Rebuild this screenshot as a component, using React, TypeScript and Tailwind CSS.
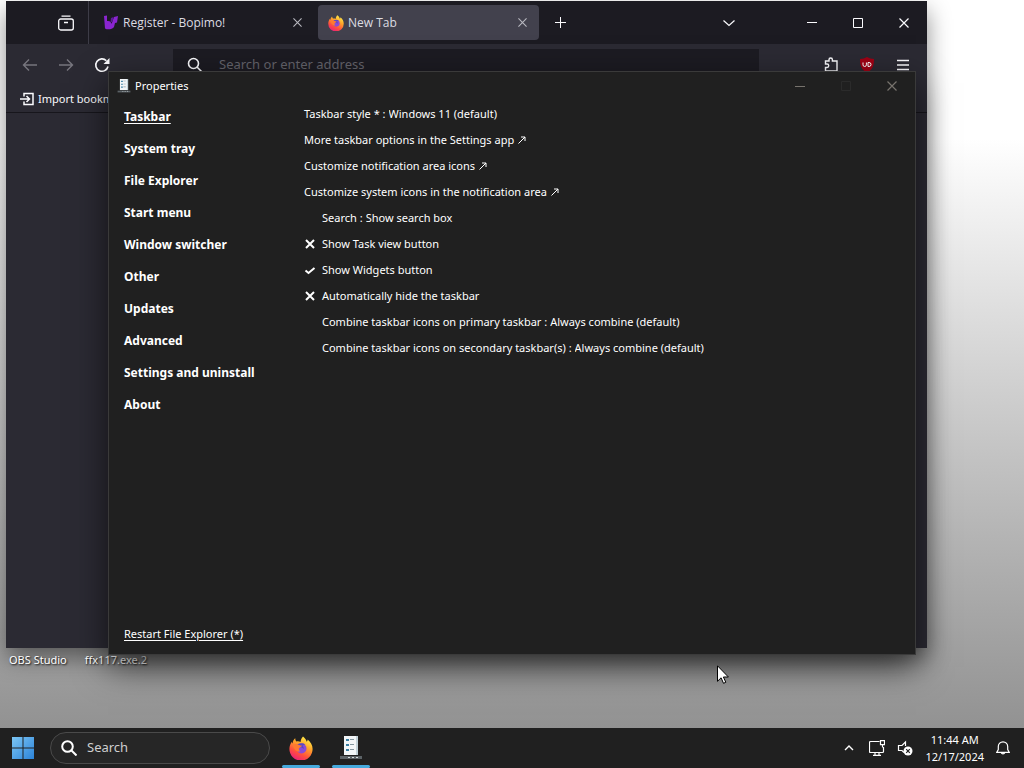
import { useState } from "react";
import type { ReactNode } from "react";

const sections = [
  "Taskbar",
  "System tray",
  "File Explorer",
  "Start menu",
  "Window switcher",
  "Other",
  "Updates",
  "Advanced",
  "Settings and uninstall",
  "About",
];

type Row =
  | { kind: "select"; label: string; value: string; indent?: boolean }
  | { kind: "link"; label: string }
  | { kind: "toggle"; label: string; checked: boolean };

const rows: Row[] = [
  { kind: "select", label: "Taskbar style *", value: "Windows 11 (default)" },
  { kind: "link", label: "More taskbar options in the Settings app" },
  { kind: "link", label: "Customize notification area icons" },
  { kind: "link", label: "Customize system icons in the notification area" },
  { kind: "select", label: "Search", value: "Show search box", indent: true },
  { kind: "toggle", label: "Show Task view button", checked: false },
  { kind: "toggle", label: "Show Widgets button", checked: true },
  { kind: "toggle", label: "Automatically hide the taskbar", checked: false },
  {
    kind: "select",
    label: "Combine taskbar icons on primary taskbar",
    value: "Always combine (default)",
    indent: true,
  },
  {
    kind: "select",
    label: "Combine taskbar icons on secondary taskbar(s)",
    value: "Always combine (default)",
    indent: true,
  },
];

function Stroke({
  size,
  width = 1,
  className = "",
  children,
}: {
  size: number;
  width?: number;
  className?: string;
  children: ReactNode;
}) {
  return (
    <svg
      width={size}
      height={size}
      viewBox={`0 0 ${size} ${size}`}
      fill="none"
      stroke="currentColor"
      strokeWidth={width}
      className={`shrink-0 ${className}`}
      aria-hidden="true"
    >
      {children}
    </svg>
  );
}

function CloseIcon({ size }: { size: number }) {
  return (
    <svg
      width={size}
      height={size}
      viewBox="0 0 10 10"
      fill="none"
      stroke="currentColor"
      strokeWidth="1.2"
      className="shrink-0"
      aria-hidden="true"
    >
      <path d="M.5.5l9 9M9.5.5l-9 9" />
    </svg>
  );
}

function FirefoxIcon({ className }: { className: string }) {
  return (
    <svg viewBox="0 0 24 24" className={className} aria-hidden="true">
      <defs>
        <linearGradient id="fox" x1="0.8" y1="0.05" x2="0.3" y2="1">
          <stop offset="0" stopColor="#fff04a" />
          <stop offset="0.35" stopColor="#ffa52a" />
          <stop offset="0.7" stopColor="#ff4f3d" />
          <stop offset="1" stopColor="#e8207c" />
        </linearGradient>
      </defs>
      <path
        d="M14 .5c2 1.500 3.200 3.200 3.700 5.200.8-.6 1-1.500.9-2.300 3 2.300 5 5.800 5 9.600a11.600 11.600 0 0 1-23.200 0c0-3 1-5.500 2.500-7.300 0 .8.2 1.300.6 1.800C3.800 5.200 5 3.200 6.300 2.300c-.1 1.400.4 2.300 1.200 3.100 1.500-.3 2.900-.1 4.100.5.1-2 .9-4 2.400-5.400z"
        fill="url(#fox)"
      />
      <circle cx="12.500" cy="12.500" r="5" fill="#8a4bd6" />
      <path d="M9 8c2-1.200 5.500-1.200 7.500.7-1.500-.2-2.500.3-3 1 1 .8 1.500 2 1 3.300-2-2.500-5-2.200-6.500-.3-.8-1.700-.4-3.700 1-4.700z" fill="#5a48c0" />
      <path d="M3.500 9c2-1.500 4.500-1.500 6.500 0 .8.600 2 .5 3 .7-.5 1.200-2.300 1.600-3 2.500-.5 1 0 2.500 1.500 3.200-3.500.8-6-1-8-6.400z" fill="#ff7a30" />
    </svg>
  );
}

// notebook page standing on a taskbar strip
function PropertiesIcon({ className }: { className: string }) {
  return (
    <svg viewBox="0 0 24 24" className={className} aria-hidden="true">
      <path d="M5 0h14v19H5z" fill="#f2f6f8" />
      <path d="M17 0h2v19h-2z" fill="#c3d3da" />
      <path d="M7 3h3v2H7zM7 8h3v2H7zM7 13h3v2H7z" fill="#3a7fa3" />
      <path d="M11 3h4v1h-4zM11 8h4v1h-4zM11 13h4v1h-4z" fill="#8497a0" />
      <path d="M1 20h22v3H1z" fill="#5b6266" />
      <path d="M9 21h2v1H9zM13 21h2v1h-2zM17 21h2v1h-2z" fill="#d5dcdf" />
    </svg>
  );
}

function BrowserWindow() {
  return (
    <section
      aria-label="Firefox"
      className="absolute top-px right-[97px] bottom-20 left-1.5 flex flex-col bg-[#2b2a33] text-[#fbfbfe] shadow-[0_10px_22px_rgba(0,0,0,0.45)]"
    >
      <div className="flex h-[43px] shrink-0 items-center bg-[#1c1b22]">
        <div className="flex h-full w-[83px] shrink-0 items-center justify-end border-r border-[#3d3c47] pr-3.5">
          <button aria-label="Firefox View">
            <Stroke size={16} width={1.3}>
              <path d="M3.500 1.200h9M2.700 4h10.600a2 2 0 0 1 2 2v7a2 2 0 0 1-2 2H2.700a2 2 0 0 1-2-2V6a2 2 0 0 1 2-2zM6 7.500h4" />
            </Stroke>
          </button>
        </div>
        <div className="ml-2 flex h-9 w-[221px] items-center gap-1 pr-4 pl-1.5">
          <svg viewBox="0 0 16 16" className="size-4 shrink-0" fill="#8a25d0" aria-hidden="true">
            <path d="M1 1l3-.5V6c3-.5 4.500 1 4.500 3L11 2l4-1-1 6.500-2 .5-1 4c-1.500 2.500-7 3-9 1.500z" />
            <path d="M8 3l2.500-1-1 4.500-2 1z" fill="#5d1a9c" />
          </svg>
          <span className="flex-1 truncate font-['Open_Sans',sans-serif] text-xs text-[#dcdce2]">
            Register - Bopimo!
          </span>
          <button aria-label="Close Register - Bopimo!" className="text-[#b9b9c0]">
            <CloseIcon size={9} />
          </button>
        </div>
        <div className="flex h-[35px] w-[221px] items-center gap-1 rounded bg-[#42414d] pr-3 pl-2.5">
          <FirefoxIcon className="size-4 shrink-0" />
          <span className="flex-1 truncate font-['Open_Sans',sans-serif] text-xs text-[#dcdce2]">
            New Tab
          </span>
          <button aria-label="Close New Tab" className="text-[#b9b9c0]">
            <CloseIcon size={9} />
          </button>
        </div>
        <button aria-label="Open a new tab" className="ml-4">
          <Stroke size={11}>
            <path d="M5.500 0v11M0 5.500h11" />
          </Stroke>
        </button>
        <div className="ml-auto flex items-center pr-[18px]">
          <button aria-label="List all tabs" className="mr-[72px]">
            <Stroke size={12} width={1.2}>
              <path d="M.5 3.500l5.500 5 5.500-5" />
            </Stroke>
          </button>
          <button aria-label="Minimize" className="mr-9">
            <Stroke size={10}>
              <path d="M0 4.500h10" />
            </Stroke>
          </button>
          <button aria-label="Maximize" className="mr-9">
            <Stroke size={10}>
              <path d="M.5.5h9v9h-9z" />
            </Stroke>
          </button>
          <button aria-label="Close">
            <CloseIcon size={10} />
          </button>
        </div>
      </div>
      <div className="flex h-[42px] shrink-0 items-center pr-[18px] pl-4">
        <button aria-label="Back" className="text-[#77767e]">
          <Stroke size={16} width={1.4}>
            <path d="M15 8H1.500M7 2.500L1.500 8 7 13.500" />
          </Stroke>
        </button>
        <button aria-label="Forward" className="ml-5 text-[#77767e]">
          <Stroke size={16} width={1.4}>
            <path d="M1 8h13.500M9 2.500L14.500 8 9 13.500" />
          </Stroke>
        </button>
        <button aria-label="Reload" className="ml-5">
          <Stroke size={16} width={1.6}>
            <path d="M14 9.500A6.200 6.200 0 1 1 12.400 3.700" />
            <path d="M15.500 1v6h-6z" fill="currentColor" stroke="none" />
          </Stroke>
        </button>
        <label className="ml-[63px] flex h-8 flex-1 items-center gap-4 bg-[#1c1b22] pl-3.5">
          <Stroke size={16} width={1.6}>
            <circle cx="6.500" cy="6.500" r="5" />
            <path d="M10 10l5 5" />
          </Stroke>
          <input
            type="text"
            aria-label="Search or enter address"
            placeholder="Search or enter address"
            className="w-full bg-transparent text-[13px] outline-none placeholder:text-[#65646c]"
          />
        </label>
        <button aria-label="Extensions" className="ml-16">
          <Stroke size={16} width={1.4}>
            <path d="M2.500 4h3.500V2.700a1.700 1.700 0 0 1 3.400 0V4h4.600v10H2.500v-3.500H4A1.700 1.700 0 0 0 4 7H2.500z" />
          </Stroke>
        </button>
        <button aria-label="uBlock Origin" className="ml-5">
          <svg viewBox="0 0 16 16" className="size-4" aria-hidden="true">
            <path d="M8 0c2 1.300 4.500 2 7 2 0 7-1.500 10.500-7 14C2.500 12.500 1 9 1 2c2.500 0 5-.7 7-2z" fill="#a00014" />
            <path d="M4 5.500v2.300a1.700 1.700 0 0 0 3.400 0V5.500M9 5.500v4h1a2 2 0 0 0 0-4z" fill="none" stroke="#fff" strokeWidth="1" />
          </svg>
        </button>
        <button aria-label="Open application menu" className="ml-[22px]">
          <Stroke size={12} width={1.5}>
            <path d="M0 1.500h12M0 6h12M0 10.500h12" />
          </Stroke>
        </button>
      </div>
      <div className="flex h-[27px] shrink-0 items-center border-b border-[#17161c] pl-3.5">
        <button className="flex items-center gap-1 text-[11px] whitespace-nowrap">
          <Stroke size={14} width={1.5}>
            <path d="M4 4.500V1.500h9v11H4V9.500M0 7h9M6.500 4L9.500 7l-3 3" />
          </Stroke>
          Import bookmarks...
        </button>
      </div>
    </section>
  );
}

function SettingRow({ row }: { row: Row }) {
  const [checked, setChecked] = useState(row.kind === "toggle" && row.checked);

  if (row.kind === "link") {
    return (
      <a href="#" className="flex h-[26px] items-center gap-1">
        {row.label}
        <Stroke size={8}>
          <path d="M.5 7.500l6.500-6.500M3 1h4v4" />
        </Stroke>
      </a>
    );
  }

  if (row.kind === "toggle") {
    return (
      <label className="flex h-[26px] items-center gap-1.5">
        <input
          type="checkbox"
          className="sr-only"
          checked={checked}
          onChange={(e) => setChecked(e.target.checked)}
        />
        <Stroke size={12} width={2}>
          {checked ? <path d="M1.500 6.500l3 2.500 6-5" /> : <path d="M2 2l8 8M10 2l-8 8" />}
        </Stroke>
        {row.label}
      </label>
    );
  }

  return (
    <label className={`flex h-[26px] items-center gap-[3px] ${row.indent ? "pl-[18px]" : ""}`}>
      {row.label} :
      <select className="appearance-none bg-transparent outline-none">
        <option>{row.value}</option>
      </select>
    </label>
  );
}

function PropertiesWindow() {
  const [active, setActive] = useState("Taskbar");

  return (
    <section
      aria-label="Properties"
      className="absolute top-[71px] right-[108px] bottom-[73px] left-[108px] flex flex-col border border-[#3a3a3a] bg-[#202020] text-[11px] text-white shadow-[0_12px_32px_rgba(0,0,0,0.6)]"
    >
      <div className="flex h-7 shrink-0 items-center pr-[18px] pl-2">
        <PropertiesIcon className="size-3.5" />
        <h1 className="ml-1 flex-1">Properties</h1>
        <button aria-label="Minimize" className="mr-9 text-[#77736d]">
          <Stroke size={10}>
            <path d="M0 5.500h10" />
          </Stroke>
        </button>
        <button aria-label="Maximize" disabled className="mr-9 text-[#2b2b2b]">
          <Stroke size={10}>
            <path d="M.5.5h9v9h-9z" />
          </Stroke>
        </button>
        <button aria-label="Close" className="text-[#77736d]">
          <CloseIcon size={10} />
        </button>
      </div>
      <div className="flex flex-1 pt-px">
        <nav className="flex w-[195px] shrink-0 flex-col items-start pb-1 pl-[15px]">
          {sections.map((name) => (
            <button
              key={name}
              onClick={() => setActive(name)}
              className={`h-8 text-xs font-bold ${name === active ? "underline underline-offset-2" : ""}`}
            >
              {name}
            </button>
          ))}
          <button className="mt-auto h-8 underline underline-offset-2">
            Restart File Explorer (*)
          </button>
        </nav>
        <div className="flex flex-1 flex-col items-start">
          {rows.map((row) => (
            <SettingRow key={row.label} row={row} />
          ))}
        </div>
      </div>
    </section>
  );
}

function Taskbar() {
  return (
    <footer className="flex h-10 shrink-0 items-center bg-[#202020] pr-3.5 pl-3 text-white">
      <button aria-label="Start">
        <svg viewBox="0 0 22 22" className="size-[22px]" aria-hidden="true">
          <defs>
            <linearGradient id="start" x1="0" y1="0" x2="1" y2="1">
              <stop offset="0" stopColor="#7cc6f5" />
              <stop offset="1" stopColor="#2c83d8" />
            </linearGradient>
          </defs>
          <path d="M0 0h10.500v10.500H0zM11.500 0H22v10.500H11.500zM0 11.500h10.500V22H0zM11.500 11.500H22V22H11.500z" fill="url(#start)" />
        </svg>
      </button>
      <label className="ml-4 flex h-8 w-[220px] items-center gap-2.5 rounded-full border border-[#4a4a4a] bg-[#262626] px-2.5">
        <Stroke size={16} width={2}>
          <circle cx="6.500" cy="6.500" r="5.300" />
          <path d="M10.500 10.500l5 5" />
        </Stroke>
        <input
          type="text"
          aria-label="Search"
          placeholder="Search"
          className="w-full bg-transparent text-[13px] outline-none placeholder:text-[#cfcfcf]"
        />
      </label>
      <button aria-label="Firefox" className="ml-3 flex h-full w-[38px] flex-col items-center justify-between pt-2">
        <FirefoxIcon className="size-6" />
        <span className="h-[3px] w-full rounded-full bg-[#45a9dc]" />
      </button>
      <button aria-label="Properties" className="ml-3 flex h-full w-[38px] flex-col items-center justify-between pt-2">
        <PropertiesIcon className="size-6" />
        <span className="h-[3px] w-full rounded-full bg-[#45a9dc]" />
      </button>
      <div className="ml-auto flex items-center">
        <button aria-label="Show hidden icons">
          <Stroke size={10} width={1.4}>
            <path d="M1 7l4-4 4 4" />
          </Stroke>
        </button>
        <button aria-label="Network" className="ml-[15px]">
          <Stroke size={16} width={1.2}>
            <path d="M10.500 1.500h-9a1 1 0 0 0-1 1v9a1 1 0 0 0 1 1h12a1 1 0 0 0 1-1V7M4 15.300h8M6 12.500v2.800M10 12.500v2.800M11.500.6h4v4h-4zM13.500 4.600v3" />
          </Stroke>
        </button>
        <button aria-label="Volume" className="ml-3">
          <Stroke size={16} width={1.2}>
            <path d="M8.500 6V2L5 5.500H1.500v5H5l2 2" />
            <circle cx="11" cy="11" r="4.500" fill="currentColor" stroke="none" />
            <path d="M9.200 9.200l3.600 3.600M12.800 9.200l-3.600 3.600" stroke="#202020" />
          </Stroke>
        </button>
        <time className="ml-3 text-center text-[11px] leading-[17px]">
          11:44 AM
          <br />
          12/17/2024
        </time>
        <button aria-label="Notifications" className="ml-3">
          <Stroke size={14} width={1.2}>
            <path d="M7 .8a4.700 4.700 0 0 0-4.700 4.700v3L.8 11.300h12.400L11.700 8.500v-3A4.700 4.700 0 0 0 7 .8zM5.200 11.500a1.900 1.900 0 0 0 3.600 0" />
          </Stroke>
        </button>
      </div>
    </footer>
  );
}

export default function App() {
  return (
    <div className="flex h-screen flex-col overflow-hidden font-['Noto_Sans','Open_Sans',sans-serif]">
      <main className="relative flex-1 overflow-hidden bg-linear-to-b from-white from-19% to-[#929292]">
        <BrowserWindow />
        <div className="absolute bottom-[60px] left-[9px] flex gap-[18px] text-[11px] text-white [text-shadow:1px_1px_2px_#000]">
          <span>OBS Studio</span>
          <span>ffx117.exe.2</span>
        </div>
        <PropertiesWindow />
        <svg viewBox="0 0 12 19" className="absolute bottom-11 left-[717px] h-[19px] w-3" aria-hidden="true">
          <path d="M.5.8v15.500l3.600-3.500 2.400 5.500 2.300-1-2.400-5.300h5z" fill="#fff" stroke="#000" />
        </svg>
      </main>
      <Taskbar />
    </div>
  );
}
